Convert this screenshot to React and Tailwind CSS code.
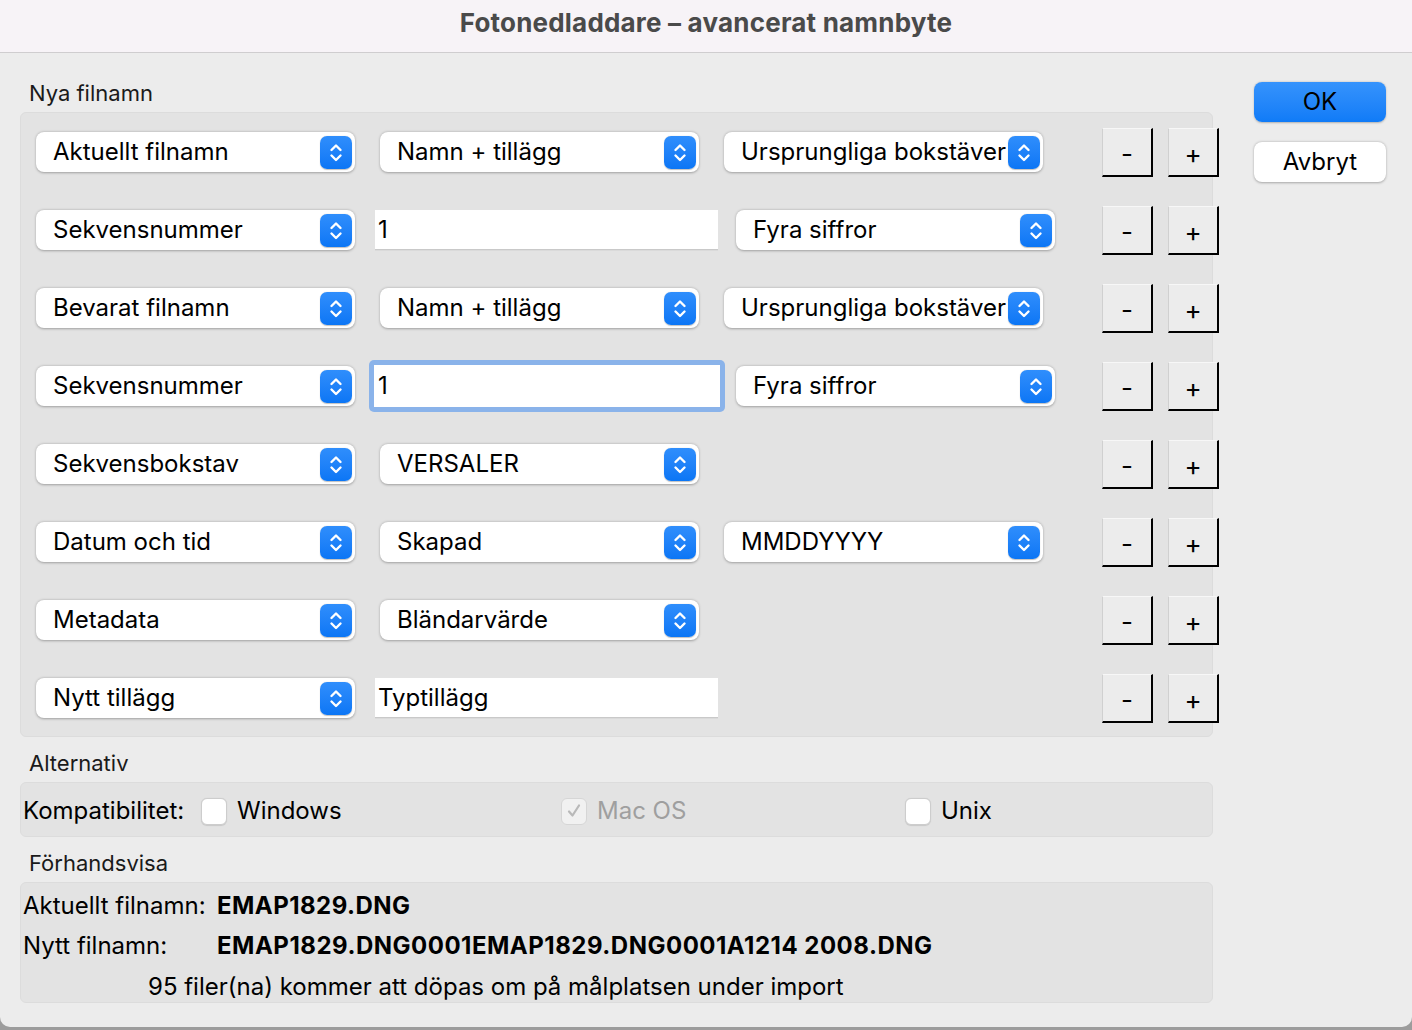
import React from "react";

const font = "font-['Inter','Noto_Sans',sans-serif]";

function Stepper() {
  return (
    <div className="w-[32px] h-[33px] rounded-[7px] bg-gradient-to-b from-[#2f8efc] to-[#0b76f5] flex items-center justify-center shrink-0 shadow-[0_0.5px_1px_rgba(0,0,0,0.25)]">
      <svg width="32" height="33" viewBox="0 0 32 33" fill="none">
        <path d="M11.5 14 L16 9.5 L20.5 14" stroke="white" strokeWidth="2.4" strokeLinecap="round" strokeLinejoin="round" />
        <path d="M11.5 19.5 L16 24 L20.5 19.5" stroke="white" strokeWidth="2.4" strokeLinecap="round" strokeLinejoin="round" />
      </svg>
    </div>
  );
}

function Select({ label, w = "w-[319px]", ml = "" }) {
  return (
    <div className={`${w} ${ml} h-[40px] bg-white rounded-[8px] shadow-[0_0.5px_2.5px_rgba(0,0,0,0.3)] flex items-center pl-[17px] pr-[3px] shrink-0`}>
      <span className="flex-1 min-w-0 text-[24px] leading-[30px] text-black whitespace-nowrap">{label}</span>
      <Stepper />
    </div>
  );
}

function Field({ value, ml = "" }) {
  return (
    <div className={`w-[343px] h-[40px] ${ml} bg-white border-b border-[#c9c9c9] shadow-[0_0.5px_0_rgba(0,0,0,0.08)] flex items-center pl-[3px] shrink-0`}>
      <span className="text-[24px] leading-[30px] text-black">{value}</span>
    </div>
  );
}

function FocusField({ value }) {
  return (
    <div className="w-[356px] h-[52px] ml-[14px] rounded-[5px] bg-[#8ab3ea] p-[5px] shrink-0">
      <div className="w-full h-full bg-white flex items-center pl-[4px]">
        <span className="text-[24px] leading-[30px] text-black">{value}</span>
      </div>
    </div>
  );
}

function PMButton({ children, ml = "" }) {
  return (
    <div className={`w-[51px] h-[49px] ${ml} bg-[#ececec] border-t border-l border-t-[#f7f7f7] border-l-[#d0d0d0] border-r-2 border-b-2 border-r-black border-b-black flex items-center justify-center shrink-0`}>
      <span className="text-[26px] leading-[28px] text-black mt-[4px]">{children}</span>
    </div>
  );
}

function Row({ children }) {
  return (
    <div className="h-[78px] flex items-center">
      <div className="w-[1066px] shrink-0 flex items-center">{children}</div>
      <PMButton>-</PMButton>
      <PMButton ml="ml-[15px]">+</PMButton>
    </div>
  );
}

function Checkbox({ checked, disabled }) {
  return (
    <div
      className={`w-[26px] h-[27px] rounded-[6px] border flex items-center justify-center shrink-0 ${
        disabled ? "bg-[#f1f1f1] border-[#d6d6d6]" : "bg-white border-[#cdcdcd] shadow-[0_0.5px_1px_rgba(0,0,0,0.12)]"
      }`}
    >
      {checked && (
        <svg width="18" height="18" viewBox="0 0 18 18" fill="none">
          <path d="M4 9.5 L7.5 13.5 L14 3.5" stroke="#b9b9b9" strokeWidth="2.2" strokeLinecap="round" strokeLinejoin="round" />
        </svg>
      )}
    </div>
  );
}

function GroupLabel({ children, pt = "pt-[14px]" }) {
  return (
    <div className={`${pt} pb-[7px] pl-[9px] text-[22px] leading-[24px] text-[#1a1a1a]`}>{children}</div>
  );
}

export default function App() {
  return (
    <div className={`w-[1412px] h-[1030px] bg-[#9c9c9c] ${font}`}>
      <div className="w-[1412px] h-[1027px] bg-[#ececec] rounded-b-[10px] overflow-hidden flex flex-col">
        <div className="h-[53px] bg-[#f7f3f7] border-b border-[#cfcdcf] flex items-center justify-center shrink-0 pb-[6px]">
          <span className="text-[26px] font-bold text-[#4a4a4a] leading-[30px] tracking-[0.2px]">Fotonedladdare – avancerat namnbyte</span>
        </div>
        <div className="flex pl-[20px]">
          <div className="w-[1193px] flex flex-col">
            <GroupLabel pt="pt-[28px]">Nya filnamn</GroupLabel>
            <div className="h-[625px] bg-[#e3e3e3] border border-[#dcdcdc] rounded-[6px] pl-[15px]">
              <Row>
                <Select label="Aktuellt filnamn" />
                <Select label="Namn + tillägg" ml="ml-[25px]" />
                <Select label="Ursprungliga bokstäver" ml="ml-[25px]" />
              </Row>
              <Row>
                <Select label="Sekvensnummer" />
                <Field value="1" ml="ml-[20px]" />
                <Select label="Fyra siffror" ml="ml-[18px]" />
              </Row>
              <Row>
                <Select label="Bevarat filnamn" />
                <Select label="Namn + tillägg" ml="ml-[25px]" />
                <Select label="Ursprungliga bokstäver" ml="ml-[25px]" />
              </Row>
              <Row>
                <Select label="Sekvensnummer" />
                <FocusField value="1" />
                <Select label="Fyra siffror" ml="ml-[11px]" />
              </Row>
              <Row>
                <Select label="Sekvensbokstav" />
                <Select label="VERSALER" ml="ml-[25px]" />
              </Row>
              <Row>
                <Select label="Datum och tid" />
                <Select label="Skapad" ml="ml-[25px]" />
                <Select label="MMDDYYYY" ml="ml-[25px]" />
              </Row>
              <Row>
                <Select label="Metadata" />
                <Select label="Bländarvärde" ml="ml-[25px]" />
              </Row>
              <Row>
                <Select label="Nytt tillägg" />
                <Field value="Typtillägg" ml="ml-[20px]" />
              </Row>
            </div>

            <GroupLabel>Alternativ</GroupLabel>
            <div className="h-[55px] bg-[#e3e3e3] border border-[#dcdcdc] rounded-[6px] flex items-center pl-[2px] pt-[3px] text-[24px] leading-[30px]">
              <span className="w-[178px] text-black">Kompatibilitet:</span>
              <div className="w-[360px] flex items-center">
                <Checkbox />
                <span className="ml-[10px] text-black">Windows</span>
              </div>
              <div className="w-[344px] flex items-center">
                <Checkbox checked disabled />
                <span className="ml-[10px] text-[#9f9f9f]">Mac OS</span>
              </div>
              <div className="flex items-center">
                <Checkbox />
                <span className="ml-[10px] text-black">Unix</span>
              </div>
            </div>

            <GroupLabel>Förhandsvisa</GroupLabel>
            <div className="h-[121px] bg-[#e3e3e3] border border-[#dcdcdc] rounded-[6px] pt-[3px] pl-[2px] text-[24px] text-black">
              <div className="h-[40px] flex items-center">
                <span className="w-[194px]">Aktuellt filnamn:</span>
                <span className="font-bold tracking-[0.45px]">EMAP1829.DNG</span>
              </div>
              <div className="h-[40px] flex items-center">
                <span className="w-[194px]">Nytt filnamn:</span>
                <span className="font-bold tracking-[0.5px]">EMAP1829.DNG0001EMAP1829.DNG0001A1214 2008.DNG</span>
              </div>
              <div className="h-[41px] flex items-center pl-[125px]">
                <span>95 filer(na) kommer att döpas om på målplatsen under import</span>
              </div>
            </div>
          </div>

          <div className="ml-[41px] w-[132px] flex flex-col pt-[29px]">
            <div className="h-[40px] rounded-[8px] bg-gradient-to-b from-[#3593fc] to-[#0f7bf7] shadow-[0_0.5px_2px_rgba(0,0,0,0.25)] flex items-center justify-center">
              <span className="text-[24px] leading-[30px] text-black">OK</span>
            </div>
            <div className="mt-[20px] h-[40px] rounded-[8px] bg-white shadow-[0_0.5px_2.5px_rgba(0,0,0,0.3)] flex items-center justify-center">
              <span className="text-[24px] leading-[30px] text-black">Avbryt</span>
            </div>
          </div>
        </div>
      </div>
    </div>
  );
}
